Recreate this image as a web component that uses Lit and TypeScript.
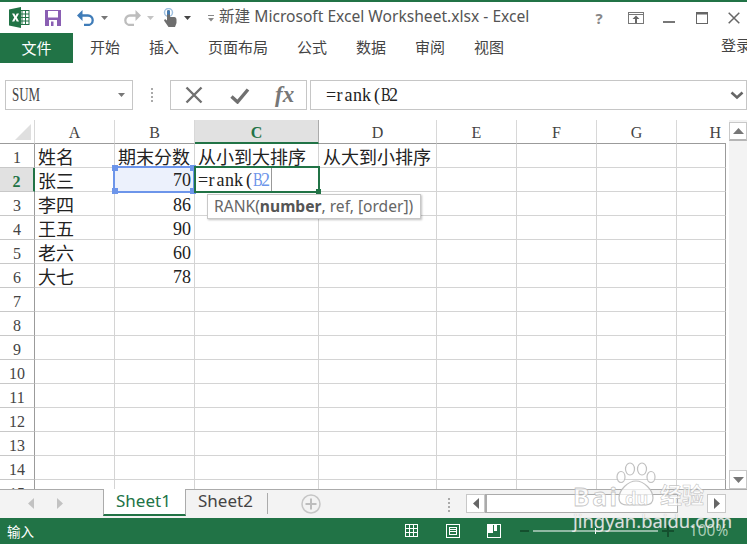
import { LitElement, html, css, svg } from "lit";
import { customElement } from "lit/decorators.js";

const COLS: [string, number][] = [["A", 80], ["B", 80], ["C", 124], ["D", 118], ["E", 80], ["F", 80], ["G", 80], ["H", 49]];
const ROW: Record<number, string[]> = {
  1: ["姓名", "期末分数", "从小到大排序", "从大到小排序"],
  2: ["张三", "70"],
  3: ["李四", "86"],
  4: ["王五", "90"],
  5: ["老六", "60"],
  6: ["大七", "78"],
};

@customElement("app-root")
export class AppRoot extends LitElement {
  static styles = css`
    :host { display: block; width: 747px; height: 544px; overflow: hidden; background: #fff; position: relative; font-family: "Noto Sans CJK SC", sans-serif; color: #444; }
    * { box-sizing: border-box; }
    .app { display: flex; flex-direction: column; height: 544px; border-top: 2px solid #217346; }
    .title { height: 31px; display: flex; align-items: center; flex: none; padding-left: 9px; }
    .title svg { display: block; flex: none; }
    .qat { display: flex; align-items: center; }
    .doc { font: 15.6px "Noto Sans", "Noto Sans CJK SC", sans-serif; color: #555; margin: -4px 0 0 5px; white-space: nowrap; }
    .win { margin-left: auto; display: flex; align-items: center; padding-right: 7px; }
    .ribbon { height: 30px; flex: none; display: flex; align-items: center; font-size: 15px; position: relative; }
    .file { width: 73px; height: 30px; background: #217346; color: #fff; display: flex; align-items: center; justify-content: center; margin-right: 17px; padding-bottom: 2px; }
    .tabs { display: flex; gap: 29px; color: #444; margin-top: -3px; }
    .login { margin-left: auto; margin-top: -8px; width: 26px; overflow: hidden; white-space: nowrap; }
    .fbar { height: 30px; margin-top: 17px; flex: none; display: flex; padding-left: 5px; }
    .box { border: 1px solid #c6c6c6; background: #fff; height: 30px; display: flex; align-items: center; }
    .name { width: 128px; padding: 0 7px 0 6px; color: #444; justify-content: space-between; }
    .sum { font: 18px "Liberation Serif", serif; display: inline-block; width: 27px; transform: scaleX(.72); transform-origin: left; white-space: nowrap; }
    .dots { width: 37px; display: flex; flex-direction: column; align-items: center; justify-content: center; gap: 2px; }
    .dots i { width: 2px; height: 2px; background: #aaa; }
    .fx { width: 137px; padding-left: 14px; margin-right: 3px; }
    .fx .ok { margin-left: 27px; }
    .ff { font: italic 700 23px "Liberation Serif", serif; color: #777; margin-left: 25px; }
    .input { flex: 1; padding-left: 15px; color: #222; justify-content: space-between; padding-right: 1px; }
    .ms { display: inline-flex; font: 18px/24px "Liberation Serif", serif; white-space: nowrap; }
    .ms span { display: inline-block; width: 9px; text-align: center; }
    .ms span.cap { transform: scaleX(.8); }
    .ms span.par { text-align: right; }
    .ms .blue { color: #6d95ea; }
    .sheet { height: 369px; margin-top: 10px; flex: none; display: flex; position: relative; overflow: hidden; }
    .grid { width: 726px; flex: none; height: 369px; overflow: hidden; font: 18px "Noto Sans CJK SC", sans-serif; }
    .hrow, .row { display: flex; height: 24px; }
    .corner { width: 35px; flex: none; border-right: 1px solid #d8d8d8; border-bottom: 1px solid #9b9b9b; position: relative; }
    .corner::after { content: ""; position: absolute; right: 3px; bottom: 3px; border-style: solid; border-width: 0 0 16px 16px; border-color: transparent transparent #dfdfdf transparent; }
    .ch { flex: none; text-align: center; border-right: 1px solid #d8d8d8; border-bottom: 1px solid #9b9b9b; font: 16px/26px "Liberation Serif", serif; color: #444; }
    .ch.last { border-right: 0; text-align: right; padding-right: 5px; }
    .ch.on { background: #e1e1e1; color: #217346; font-weight: 700; border-bottom: 2px solid #217346; border-right-color: #ababab; }
    .rh { width: 35px; flex: none; text-align: center; border-right: 1px solid #9b9b9b; border-bottom: 1px solid #c8c8c8; font: 16px/27px "Liberation Serif", serif; color: #444; }
    .rh.on { background: #e1e1e1; color: #217346; font-weight: 700; border-right: 2px solid #217346; }
    .c { flex: none; border-right: 1px solid #d4d4d4; border-bottom: 1px solid #d4d4d4; padding: 0 3px; white-space: nowrap; line-height: 24px; color: #222; }
    .c.d { padding-left: 4px; }
    .c.last { border-right: 1px solid #9b9b9b; }
    .c.num { text-align: right; font: 18px/27px "Liberation Serif", serif; }
    .vbar { flex: 1; background: linear-gradient(to right, #fff 3px, #f3f3f3 3px); padding: 2px 0 0 3px; display: flex; flex-direction: column; justify-content: space-between; }
    .vbtn { height: 19px; background: #fff; border: 1px solid #c8c8c8; display: flex; align-items: center; justify-content: center; }
    .vbtn.up { border-bottom: 2px solid #b5b5b5; }
    .refbox { position: absolute; left: 113px; top: 46px; width: 82px; height: 27px; border: 2px solid #6d95ea; background: #ecf1fc; }
    .refbox b { position: absolute; width: 6px; height: 6px; background: #6d95ea; }
    .refnum { position: absolute; right: 2px; top: 0; font: 18px/25px "Liberation Serif", serif; color: #222; }
    .edit { position: absolute; left: 194px; top: 46px; width: 126px; height: 27px; border: 2px solid #217346; background: #fff; padding-left: 2px; display: flex; color: #222; }
    .edit i { width: 1px; height: 23px; background: #999; margin-left: 1px; }
    .edit::after { content: ""; position: absolute; right: -3px; bottom: -3px; width: 5px; height: 5px; background: #217346; }
    .tip { position: absolute; left: 207px; top: 74px; height: 25px; width: 214px; background: #fff; border: 1px solid #c8c8c8; box-shadow: 1px 1px 2px rgba(0,0,0,.25); font: 15.6px/22px "Noto Sans", sans-serif; color: #666; padding-left: 6px; white-space: nowrap; }
    .tip b { color: #555; font-weight: 700; }
    .tabbar { height: 29px; flex: none; background: #f3f3f3; border-top: 1px solid #ababab; display: flex; position: relative; }
    .nav { width: 103px; display: flex; align-items: center; gap: 23px; padding-left: 28px; padding-bottom: 2px; }
    .stab { font: 17px/21px "Noto Sans", sans-serif; height: 26px; }
    .stab.on { width: 83px; margin-top: -1px; height: 27px; padding-left: 12px; background: #fff; color: #217346; border-left: 1px solid #ababab; border-right: 1px solid #ababab; border-bottom: 2px solid #217346; line-height: 23px; }
    .stab.off { width: 81px; padding-left: 12px; color: #444; }
    .sep { width: 1px; height: 21px; background: #ababab; margin-top: 3px; }
    .plus { margin: 4px 0 0 33px; }
    .dots2 { position: absolute; left: 448px; top: 8px; display: flex; flex-direction: column; gap: 2px; }
    .dots2 i { width: 2px; height: 2px; background: #aaa; display: block; }
    .hs { position: absolute; left: 466px; top: 4px; width: 260px; height: 19px; display: flex; }
    .hb { width: 19px; height: 19px; background: #fff; border: 1px solid #c8c8c8; display: flex; align-items: center; justify-content: center; flex: none; }
    .hthumb { width: 193px; height: 19px; background: #fff; border: 1px solid #ababab; border-left-width: 2px; flex: none; }
    .htrack { flex: 1; }
    .status { flex: 1; background: #217346; color: #fff; display: flex; align-items: center; font-size: 13.5px; padding-left: 7px; position: relative; }
    .sicons { position: absolute; left: 0; top: 0; width: 747px; height: 26px; }
    .pct { position: absolute; left: 689px; top: 2px; font: 15.4px/22px "Noto Sans", sans-serif; color: #a9cdb7; }
    .wm { position: absolute; left: 573px; top: 460px; pointer-events: none; width: 172px; height: 84px; }
    .wm span { position: absolute; white-space: nowrap; }
    .wm .bai { left: 0; top: 21px; font: 700 25px/30px "Noto Sans", sans-serif; color: rgba(255,255,255,.72); -webkit-text-stroke: .8px rgba(185,185,185,.85); letter-spacing: 2.5px; }
    .wm .du { left: 52px; top: 26px; font: 700 18px/24px "Noto Sans", sans-serif; color: rgba(255,255,255,.72); -webkit-text-stroke: .6px rgba(185,185,185,.85); }
    .wm .jy { left: 87px; top: 18px; font: 700 22px/30px "Noto Sans CJK SC", sans-serif; color: rgba(255,255,255,.72); -webkit-text-stroke: .6px rgba(185,185,185,.85); }
    .wm .url { left: 0; top: 50px; font: 18.4px/22px "Noto Sans", sans-serif; color: rgba(255,255,255,.8); text-shadow: 0 0 1px rgba(130,130,130,.6); }
  `;

  private tri(dir: "l" | "r" | "u" | "d" | "s", c = "#777") {
    const p = { l: "6,0 6,11 0,5.5", r: "0,0 0,11 6,5.5", u: "0,6 11,6 5.5,0", d: "0,0 11,0 5.5,6", s: "0,0 7,0 3.5,4" }[dir];
    const [w, h] = dir === "l" || dir === "r" ? [6, 11] : dir === "s" ? [7, 4] : [11, 6];
    return html`<svg width=${w} height=${h} viewBox="0 0 ${w} ${h}"><polygon points=${p} fill=${c}></polygon></svg>`;
  }

  private ms(text: string, blue = "") {
    const kind = (ch: string) => (/[A-Z]/.test(ch) ? "cap" : ch === "(" ? "par" : "");
    return html`<span class="ms">${[...text].map((ch) => html`<span class=${kind(ch)}>${ch}</span>`)}${[...blue].map((ch) => html`<span class="blue ${kind(ch)}">${ch}</span>`)}</span>`;
  }

  private qat() {
    return html`<div class="qat">
      <svg width="21" height="21" viewBox="0 0 21 21">
        <rect x="9" y="3.5" width="11" height="14" fill="#fff" stroke="#217346"></rect>
        <path d="M13 3.500v14M16.500 3.500v14M9 7h11M9 10.500h11M9 14h11" stroke="#217346" stroke-width="1" fill="none"></path>
        <path d="M0 2.500 12 0v21L0 18.500z" fill="#217346"></path>
        <path d="M3 6.500h2.300L6.500 9l1.200-2.500H10L7.800 10.500 10 14.500H7.700L6.500 12l-1.200 2.500H3l2.200-4z" fill="#fff"></path>
      </svg>
      <svg width="16" height="16" viewBox="0 0 16 16" style="margin-left:15px">
        <path d="M0 0h16v16H0z" fill="#8a5fb3"></path>
        <rect x="3" y="1" width="10" height="6.500" fill="#fff"></rect>
        <rect x="4" y="10" width="8" height="6" fill="#fff"></rect>
        <rect x="6" y="11.500" width="2.500" height="4.500" fill="#8a5fb3"></rect>
      </svg>
      <svg width="18" height="16" viewBox="0 0 18 16" style="margin-left:16px">
        <path d="M3 5.500h8a4.700 4.700 0 0 1 4.700 4.700c0 2.600-2 4.800-4.700 4.800H7" fill="none" stroke="#3f7cb8" stroke-width="2.300"></path>
        <path d="M0 5.500 5.500 0v11z" fill="#3f7cb8"></path>
      </svg>
      <span style="margin-left:6px;display:flex">${this.tri("s", "#777")}</span>
      <svg width="18" height="16" viewBox="0 0 18 16" style="margin-left:15px">
        <path d="M15 5.500H7a4.700 4.700 0 0 0-4.700 4.700c0 2.600 2 4.800 4.700 4.800h4" fill="none" stroke="#bdbdbd" stroke-width="2.300"></path>
        <path d="M18 5.500 12.500 0v11z" fill="#bdbdbd"></path>
      </svg>
      <span style="margin-left:6px;display:flex">${this.tri("s", "#c4c4c4")}</span>
      <svg width="14" height="19" viewBox="0 0 14 19" style="margin-left:9px">
        <circle cx="5.500" cy="4.500" r="4" fill="none" stroke="#9fc0e0" stroke-width="1.500"></circle>
        <path d="M4 3.500a1.500 1.500 0 0 1 3 0V9h4.500q2 .4 2 2.500V15l-1.500 4H5.500L1 12.500l1-1.500 2 1.500z" fill="#6e6e6e"></path>
        <rect x="4.200" y="2.500" width="2.600" height="4" fill="#3f7cb8"></rect>
      </svg>
      <span style="margin-left:7px;display:flex">${this.tri("s", "#444")}</span>
      <svg width="6" height="8" viewBox="0 0 6 8" style="margin-left:17px;margin-top:3px"><rect y="0" width="6" height="1" fill="#888"></rect><polygon points="0,3 6,3 3,6.500" fill="#888"></polygon></svg>
    </div>`;
  }

  private win() {
    return html`<div class="win">
      <span style="font:700 15px 'Noto Sans',sans-serif;color:#888;width:12px;margin-right:23px;text-align:center">?</span>
      <svg width="16" height="12" viewBox="0 0 16 12" style="margin-right:19px"><rect x=".5" y=".5" width="15" height="11" fill="none" stroke="#777"></rect><path d="M0 2.500h16" stroke="#777"></path><path d="M8 3.500 4.500 7H7v4h2V7h2.500z" fill="#666"></path></svg>
      <svg width="12" height="12" viewBox="0 0 12 12" style="margin-right:21px"><rect y="9" width="12" height="2" fill="#777"></rect></svg>
      <svg width="12" height="12" viewBox="0 0 12 12" style="margin-right:20px"><rect x=".5" y=".5" width="11" height="11" fill="none" stroke="#666"></rect><rect width="12" height="2.500" fill="#666"></rect></svg>
      <svg width="12" height="12" viewBox="0 0 12 12"><path d="M.7.700l10.600 10.600M11.300.700.7 11.300" stroke="#666" stroke-width="1.500"></path></svg>
    </div>`;
  }

  private fbar() {
    return html`<div class="fbar">
      <div class="box name"><span class="sum">SUM</span>${this.tri("s", "#777")}</div>
      <div class="dots"><i></i><i></i><i></i><i></i></div>
      <div class="box fx">
        <svg width="18" height="18" viewBox="0 0 18 18"><path d="M1.500 1.500l15 15M16.500 1.500l-15 15" stroke="#707070" stroke-width="2.400"></path></svg>
        <svg class="ok" width="20" height="17" viewBox="0 0 20 17"><path d="M1.500 9.500 7.500 15 18 2.500" fill="none" stroke="#707070" stroke-width="3.400"></path></svg>
        <span class="ff">fx</span>
      </div>
      <div class="box input">${this.ms("=rank(B2")}<svg width="14" height="9" viewBox="0 0 14 9" style="margin-right:1px"><path d="M1.500 1.500 7 6.500l5.500-5" fill="none" stroke="#666" stroke-width="2.600"></path></svg></div>
    </div>`;
  }

  private grid() {
    const rows = [];
    for (let r = 1; r <= 15; r++) {
      const vals = ROW[r] ?? [];
      rows.push(html`<div class="row">
        <div class="rh ${r === 2 ? "on" : ""}">${r}</div>
        ${COLS.map(([n, w], i) => {
          const v = vals[i] ?? "";
          const num = /^\d+$/.test(v);
          return html`<div class="c ${num ? "num" : ""} ${n === "D" ? "d" : ""} ${n === "H" ? "last" : ""}" style="width:${w}px">${v}</div>`;
        })}
      </div>`);
    }
    return html`<div class="grid">
      <div class="hrow">
        <div class="corner"></div>
        ${COLS.map(([n, w]) => html`<div class="ch ${n === "C" ? "on" : ""} ${n === "H" ? "last" : ""}" style="width:${w}px">${n}</div>`)}
      </div>
      ${rows}
    </div>`;
  }

  render() {
    return html`<div class="app">
      <div class="title">
        ${this.qat()}
        <span class="doc">新建 Microsoft Excel Worksheet.xlsx - Excel</span>
        ${this.win()}
      </div>
      <div class="ribbon">
        <div class="file">文件</div>
        <div class="tabs"><span>开始</span><span>插入</span><span>页面布局</span><span>公式</span><span>数据</span><span>审阅</span><span>视图</span></div>
        <div class="login">登录</div>
      </div>
      ${this.fbar()}
      <div class="sheet">
        ${this.grid()}
        <div class="vbar">
          <div class="vbtn up">${this.tri("u", "#777")}</div>
          <div class="vbtn">${this.tri("d", "#777")}</div>
        </div>
        <div class="refbox">
          <b style="left:-3px;top:-3px"></b><b style="right:-3px;top:-3px"></b><b style="left:-3px;bottom:-3px"></b><b style="right:-3px;bottom:-3px"></b>
          <span class="refnum">70</span>
        </div>
        <div class="edit">${this.ms("=rank(", "B2")}<i></i></div>
        <div class="tip">RANK(<b>number</b>, ref, [order])</div>
      </div>
      <div class="tabbar">
        <div class="nav">${this.tri("l", "#c2c2c2")}${this.tri("r", "#c2c2c2")}</div>
        <div class="stab on">Sheet1</div>
        <div class="stab off">Sheet2</div>
        <div class="sep"></div>
        <svg class="plus" width="20" height="20" viewBox="0 0 20 20"><circle cx="10" cy="10" r="9" fill="none" stroke="#c6c6c6" stroke-width="1.500"></circle><path d="M10 4.500v11M4.500 10h11" stroke="#bdbdbd" stroke-width="2"></path></svg>
        <div class="dots2"><i></i><i></i><i></i><i></i></div>
        <div class="hs">
          <div class="hb">${this.tri("l", "#666")}</div>
          <div class="hthumb"></div>
          <div class="htrack"></div>
          <div class="hb">${this.tri("r", "#666")}</div>
        </div>
      </div>
      <div class="status">
        <span>输入</span>
        <svg class="sicons" width="747" height="26" viewBox="0 0 747 26">
          ${svg`<g fill="none" stroke="#fff" stroke-width="1">
            <rect x="405.500" y="6.500" width="12" height="12"></rect>
            <path d="M409.500 6.500v12M413.500 6.500v12M405.500 10.500h12M405.500 14.500h12"></path>
            <rect x="446.500" y="6.500" width="13" height="13"></rect>
            <rect x="449.500" y="9.500" width="7" height="7"></rect>
            <path d="M450 11.500h6M450 13.500h6"></path>
            <rect x="487.500" y="6.500" width="13" height="13"></rect>
          </g>
          <path d="M488 7h5v8h-5zM494 7h3v6h-3z" fill="#fff"></path>
          <rect x="520" y="12" width="9" height="2" fill="#144f2e"></rect>
          <rect x="533" y="12.500" width="125" height="1" fill="#fff"></rect>
          <rect x="595" y="10" width="1" height="6" fill="#fff"></rect>
          <path d="M662 12h5V7h2v5h5v2h-5v5h-2v-5h-5z" fill="#144f2e"></path>`}
        </svg>
        <span class="pct">100%</span>
      </div>
      <div class="wm">
        <svg width="50" height="46" viewBox="0 0 50 46" style="position:absolute;left:42px;top:2px">
          <g fill="rgba(255,255,255,.72)" stroke="rgba(185,185,185,.9)" stroke-width="1.200">
            <ellipse cx="6" cy="15" rx="4" ry="5.500"></ellipse>
            <ellipse cx="15" cy="7" rx="4.500" ry="6"></ellipse>
            <ellipse cx="27" cy="7" rx="4.500" ry="6"></ellipse>
            <ellipse cx="36" cy="15" rx="4" ry="5.500"></ellipse>
            <path d="M21 19c8 0 17 9 17 17 0 6-5 7-8 7H12c-3 0-8-1-8-7 0-8 9-17 17-17z"></path>
          </g>
        </svg>
        <span class="bai">Bai</span>
        <span class="du">du</span>
        <span class="jy">经验</span>
        <span class="url">jingyan.baidu.com</span>
      </div>
    </div>`;
  }
}
